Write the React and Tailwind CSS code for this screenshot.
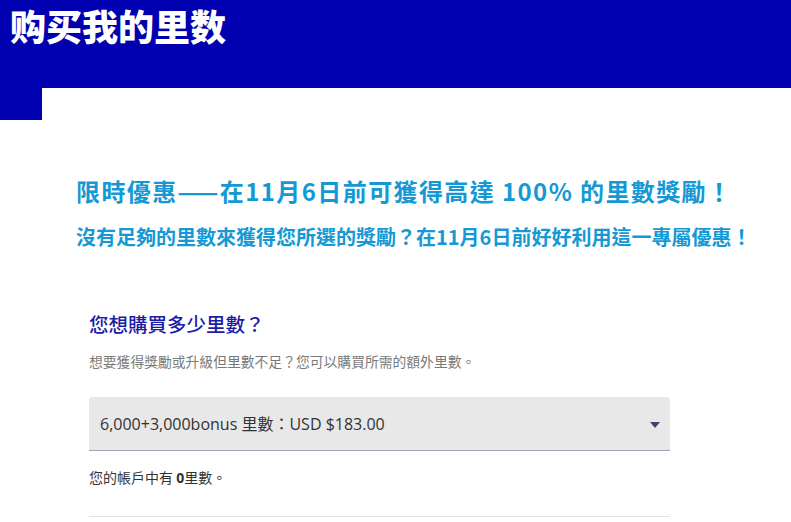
const cjk = { fontFamily: '"Noto Sans CJK TC", "Noto Sans CJK SC", sans-serif' };
const mixed = { fontFamily: '"Open Sans", "Noto Sans CJK TC", sans-serif' };

const App = () => {
    return (
        <div className="min-h-screen bg-white" style={cjk}>
            <header className="h-[88px] bg-[#0000b0]">
                <h1 className="px-[10px] pt-[3px] text-[36px] font-black leading-[44px] text-white" style={{ fontFamily: '"Noto Sans CJK SC", sans-serif' }}>
                    购买我的里数
                </h1>
            </header>
            <div className="h-[32px] w-[42px] bg-[#0000b0]" />

            <section className="mt-[55px] pl-[76px]">
                <h2 className="text-[24px] font-bold leading-[32px] tracking-[1.4px] text-[#1499d4]">
                    限時優惠——在11月6日前可獲得高達 100% 的里數獎勵！
                </h2>
                <p className="mt-[16px] text-[20px] font-bold leading-[28px] text-[#1499d4]">
                    沒有足夠的里數來獲得您所選的獎勵？在11月6日前好好利用這一專屬優惠！
                </p>
            </section>

            <section className="mt-[60px] ml-[89px] w-[581px]">
                <h3 className="text-[19.5px] font-medium leading-[26px] text-[#1c1ca6]">您想購買多少里數？</h3>
                <p className="mt-[14px] text-[13.8px] leading-[20px] text-[#7a7a7a]">
                    想要獲得獎勵或升級但里數不足？您可以購買所需的額外里數。
                </p>

                <div className="mt-[26px] flex h-[54px] items-center justify-between rounded-t-[3px] border-b border-[#9ea3bb] bg-[#e8e8e8] pl-[11px] pr-[10px]">
                    <span className="text-[16px] text-[#333]" style={mixed}>6,000+3,000bonus 里數：USD $183.00</span>
                    <svg width="10" height="6" viewBox="0 0 10 6" className="mt-[3px]">
                        <path d="M0 0h10L5 6z" fill="#3b4668" />
                    </svg>
                </div>

                <p className="mt-[16px] text-[14px] leading-[20px] text-[#333]">
                    您的帳戶中有 <span className="font-bold" style={mixed}>0</span>里數。
                </p>

                <div className="mt-[28px] border-t border-[#e2e2e2]" />
            </section>
        </div>
    );
};

export default App;
